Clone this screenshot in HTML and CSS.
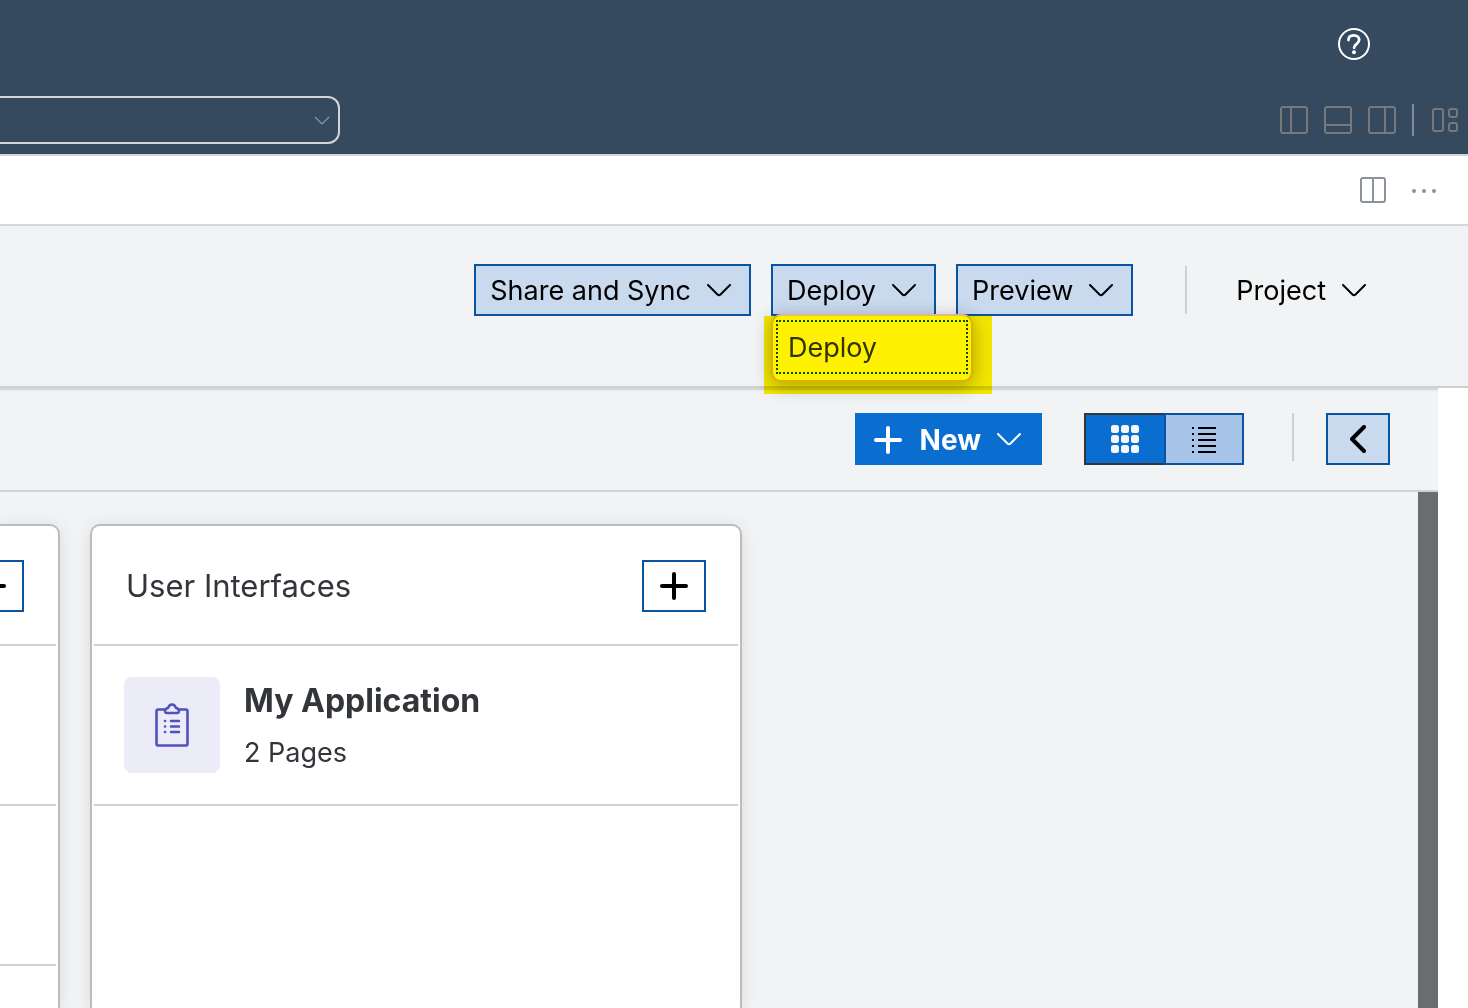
FILE: index.html
```html
<!DOCTYPE html>
<html lang="en">
<head>
<meta charset="utf-8">
<title>Project overview</title>
<link rel="stylesheet" href="styles.css">
</head>
<body>
<header class="shell">
  <div class="shell-top">
    <button class="icon-btn" aria-label="Help">
      <svg width="32" height="32" viewBox="0 0 32 32" fill="none" stroke="#fff" stroke-width="2"><circle cx="16" cy="16" r="15"/><path d="M10.500 12c0-3 2-4.700 5.200-4.700s5.500 1.700 5.500 4.500c0 4-5.100 4-5.100 8" stroke-width="2.800" stroke-linecap="round"/><circle cx="16" cy="24.200" r="2" fill="#fff" stroke="none"/></svg>
    </button>
  </div>
  <div class="shell-bottom">
    <button class="command" aria-label="Command center">
      <svg width="16" height="10" viewBox="0 0 16 10" fill="none" stroke="#8d9aa6" stroke-width="1.200"><path d="M1 2l7 7 7-7"/></svg>
    </button>
    <div class="layout-tools">
      <button class="icon-btn" aria-label="Toggle side bar"><svg width="28" height="28" viewBox="0 0 28 28" fill="none" stroke="#777879" stroke-width="2"><rect x="1" y="1" width="26" height="26" rx="2"/><path d="M11 1v26"/></svg></button>
      <button class="icon-btn" aria-label="Toggle panel"><svg width="28" height="28" viewBox="0 0 28 28" fill="none" stroke="#777879" stroke-width="2"><rect x="1" y="1" width="26" height="26" rx="2"/><path d="M1 19h26"/></svg></button>
      <button class="icon-btn" aria-label="Toggle secondary side bar"><svg width="28" height="28" viewBox="0 0 28 28" fill="none" stroke="#777879" stroke-width="2"><rect x="1" y="1" width="26" height="26" rx="2"/><path d="M17 1v26"/></svg></button>
      <span class="shell-line"></span>
      <button class="icon-btn" aria-label="Customize layout"><svg width="28" height="28" viewBox="0 0 28 28" fill="none" stroke="#777879" stroke-width="2"><rect x="1" y="3" width="10" height="22" rx="2"/><rect x="17" y="3" width="8" height="8" rx="2"/><rect x="17" y="17" width="8" height="8" rx="2"/></svg></button>
    </div>
  </div>
</header>

<div class="tabs">
  <button class="icon-btn" aria-label="Split editor"><svg width="26" height="26" viewBox="0 0 26 26" fill="none" stroke="#8b929c" stroke-width="2"><rect x="1" y="1" width="24" height="24" rx="2"/><path d="M13 1v24"/></svg></button>
  <button class="icon-btn" aria-label="More actions"><svg width="26" height="26" viewBox="0 0 26 26" fill="#8b929c"><circle cx="3" cy="14" r="2"/><circle cx="13" cy="14" r="2"/><circle cx="23" cy="14" r="2"/></svg></button>
</div>

<nav class="toolbar">
  <button class="btn">Share and Sync <svg class="chevron" viewBox="0 0 24 14"><path d="M1 1l9.500 9.500q1.500 1.500 3 0L23 1"/></svg></button>
  <div class="dropdown">
    <button class="btn" aria-expanded="true">Deploy <svg class="chevron" viewBox="0 0 24 14"><path d="M1 1l9.500 9.500q1.500 1.500 3 0L23 1"/></svg></button>
    <div class="menu"><button class="menu-item">Deploy</button></div>
    <div class="marker"></div>
  </div>
  <button class="btn">Preview <svg class="chevron" viewBox="0 0 24 14"><path d="M1 1l9.500 9.500q1.500 1.500 3 0L23 1"/></svg></button>
  <span class="line"></span>
  <button class="btn btn-plain">Project <svg class="chevron" viewBox="0 0 24 14"><path d="M1 1l9.500 9.500q1.500 1.500 3 0L23 1"/></svg></button>
</nav>

<main class="workspace">
  <div class="actions">
    <button class="btn btn-new"><svg class="plus" viewBox="0 0 28 28"><path d="M2 14h24M14 2v24"/></svg><span class="new-label">New</span><svg class="chevron" viewBox="0 0 24 14"><path d="M1 1l9.500 9.500q1.500 1.500 3 0L23 1"/></svg></button>
    <div class="views">
      <button class="view view-on" aria-label="Tiles" aria-pressed="true"><svg width="28" height="28" viewBox="0 0 28 28" fill="#f5f6f7"><rect width="8" height="8" rx="2.500"/><rect x="10" width="8" height="8" rx="2.500"/><rect x="20" width="8" height="8" rx="2.500"/><rect y="10" width="8" height="8" rx="2.500"/><rect x="10" y="10" width="8" height="8" rx="2.500"/><rect x="20" y="10" width="8" height="8" rx="2.500"/><rect y="20" width="8" height="8" rx="2.500"/><rect x="10" y="20" width="8" height="8" rx="2.500"/><rect x="20" y="20" width="8" height="8" rx="2.500"/></svg></button>
      <button class="view" aria-label="List" aria-pressed="false"><svg width="24" height="28" viewBox="0 -2 24 28" stroke="#000" stroke-width="2"><path d="M0 1h2M6 1h18M0 7h2M6 7h18M0 13h2M6 13h18M0 19h2M6 19h18M0 25h2M6 25h18"/></svg></button>
    </div>
    <span class="line"></span>
    <button class="square square-tint" aria-label="Collapse"><svg width="16" height="28" viewBox="0 0 16 28" fill="none" stroke="#000" stroke-width="4" stroke-linecap="round" stroke-linejoin="round"><path d="M14 2L2 14l12 12"/></svg></button>
  </div>

  <div class="canvas">
    <section class="card card-cut">
      <header class="card-head"><button class="square" aria-label="Add"><svg class="plus" viewBox="0 0 28 28"><path d="M2 14h24M14 2v24"/></svg></button></header>
      <div class="row"></div>
      <div class="row"></div>
    </section>
    <section class="card">
      <header class="card-head">
        <h2 class="card-title">User Interfaces</h2>
        <button class="square" aria-label="Add user interface"><svg class="plus" viewBox="0 0 28 28"><path d="M2 14h24M14 2v24"/></svg></button>
      </header>
      <div class="row">
        <span class="tile"><svg width="34" height="44" viewBox="0 0 34 44" fill="none" stroke="#4f52be" stroke-width="2.600" stroke-linecap="round" stroke-linejoin="round"><path d="M10 6.500H3.300Q1.500 6.500 1.500 8.300v32.400q0 1.800 1.800 1.800h27.400q1.800 0 1.800-1.800V8.300q0-1.800-1.800-1.800H24"/><path d="M12 10q-2 0-2-1.800Q10 5.500 13 5q1.200-3.500 4-3.500T21 5q3 .5 3 3.200 0 1.800-2 1.800z" stroke-width="2.400"/><path d="M10 18h.1M16 18h8M10 23.500h.1M16 23.500h8M10 29h.1M16 29h8"/></svg></span>
        <div class="text">
          <h3 class="name">My Application</h3>
          <p class="meta">2 Pages</p>
        </div>
      </div>
    </section>
    <div class="scrollbar"></div>
  </div>
</main>
</body>
</html>
```
FILE: styles.css
```css
* { box-sizing: border-box; }

body {
  margin: 0;
  min-height: 100vh;
  display: flex;
  flex-direction: column;
  background: #fff;
  color: #32363a;
  font-family: Inter, "Liberation Sans", sans-serif;
  font-size: 27px;
  line-height: 36px;
}

button {
  font: inherit;
  color: #000;
  margin: 0;
  padding: 0;
  border: 0;
  background: none;
}

svg { display: block; flex: none; }

h2, h3, p { margin: 0; }

.icon-btn { display: flex; }

/* Shell */
.shell {
  background: #354a5f;
  border-bottom: 2px solid #d4d5d6;
  padding-bottom: 10px;
}

.shell-top {
  display: flex;
  justify-content: flex-end;
  align-items: center;
  height: 88px;
  padding: 0 98px;
}

.shell-bottom {
  display: flex;
  justify-content: space-between;
  align-items: center;
  padding: 8px 8px 0 0;
}

.command {
  display: flex;
  justify-content: flex-end;
  align-items: center;
  width: 340px;
  height: 48px;
  padding-right: 8px;
  border: 2px solid #d4d5d6;
  border-left: 0;
  border-radius: 0 12px 12px 0;
}

.layout-tools { display: flex; align-items: center; gap: 16px; }

.shell-line { width: 2px; height: 32px; background: #828c98; margin-right: 2px; }

.tabs {
  display: flex;
  justify-content: flex-end;
  align-items: center;
  gap: 25px;
  height: 70px;
  padding-right: 31px;
  border-bottom: 2px solid #d5d6d8;
}

/* Toolbar */
.toolbar {
  display: flex;
  justify-content: flex-end;
  gap: 20px;
  padding: 38px 82px 70px;
  background: #f2f3f5;
  border-bottom: 2px solid #cfd0d2;
}

.btn {
  display: flex;
  align-items: center;
  gap: 16px;
  height: 52px;
  padding: 2px 18px 0 14px;
  border: 2px solid #0854a0;
  background: #c9d9ee;
  white-space: nowrap;
}

.btn-plain { border-color: transparent; background: none; }

.chevron {
  width: 24px;
  height: 14px;
  fill: none;
  stroke: currentColor;
  stroke-width: 2;
  stroke-linecap: round;
}

.plus {
  width: 28px;
  height: 28px;
  fill: none;
  stroke: currentColor;
  stroke-width: 4;
  stroke-linecap: round;
}

.line { width: 2px; height: 48px; background: #cfd0d2; }

.toolbar .line { margin: 2px 13px 0 32px; }

.dropdown { position: relative; }

.menu {
  position: absolute;
  z-index: 1;
  top: 50px;
  left: 0;
  width: 202px;
  padding: 4px 3px 6px;
  border: 2px solid #dfbb82;
  border-radius: 10px;
  background: #fff;
  box-shadow: 0 4px 18px rgba(0, 0, 0, .3);
}

.menu-item {
  display: block;
  width: 100%;
  height: 54px;
  padding: 2px 0 0 10px;
  border: 2px dotted #0854a0;
  color: #32363a;
  text-align: left;
}

/* Highlighter stroke over the open menu */
.marker {
  position: absolute;
  z-index: 2;
  top: 52px;
  left: -7px;
  width: 228px;
  height: 78px;
  background: #fff200;
  mix-blend-mode: multiply;
  pointer-events: none;
}

/* Workspace */
.workspace {
  flex: 1;
  display: flex;
  flex-direction: column;
  margin-right: 30px;
  background: #f2f3f5;
}

.actions {
  display: flex;
  justify-content: flex-end;
  padding: 25px 48px;
  border-bottom: 2px solid #d0d1d3;
  box-shadow: inset 0 4px 2px -2px #d0d1d3;
}

.btn-new {
  padding: 2px 19px 0 17px;
  border-color: #0a6ed1;
  background: #0a6ed1;
  color: #fff;
  font-size: 28px;
  font-weight: 700;
}

.new-label { margin-left: 2px; }

.views { display: flex; margin-left: 42px; }

.view {
  display: flex;
  justify-content: center;
  align-items: center;
  width: 80px;
  height: 52px;
  border: 2px solid #0854a0;
  background: #a7c4e9;
}

.view-on {
  border-color: #32363a;
  border-right: 0;
  background: #0a6ed1;
}

.actions .line { margin: 0 32px 0 48px; }

.square {
  flex: none;
  display: flex;
  justify-content: center;
  align-items: center;
  width: 64px;
  height: 52px;
  border: 2px solid #0854a0;
  background: #fff;
}

.square-tint { background: #c9d9ee; }

.canvas {
  flex: 1;
  display: flex;
  gap: 30px;
  overflow: hidden;
}

.card {
  width: 652px;
  margin-top: 32px;
  border: 2px solid #bbbcbd;
  border-bottom: 0;
  border-radius: 10px 10px 0 0;
  background: #fff;
  box-shadow: 0 2px 16px rgba(0, 0, 0, .1);
}

.card-cut { width: 60px; border-left: 0; border-top-left-radius: 0; }

.card-head {
  display: flex;
  justify-content: space-between;
  align-items: center;
  height: 120px;
  margin: 0 2px;
  padding: 2px 32px 0;
  border-bottom: 2px solid #d0d1d3;
}

.card-title { font-size: 31px; line-height: 40px; font-weight: 400; }

.row {
  display: flex;
  align-items: center;
  gap: 24px;
  height: 160px;
  margin: 0 2px;
  padding: 0 30px;
  border-bottom: 2px solid #d0d1d3;
}

.card-cut .card-head,
.card-cut .row {
  justify-content: flex-end;
  margin-left: 0;
  padding-left: 0;
}

.tile {
  display: flex;
  justify-content: center;
  align-items: center;
  width: 96px;
  height: 96px;
  border-radius: 8px;
  background: #ecebf8;
}

.name { font-size: 32px; line-height: 44px; font-weight: 700; }

.meta { margin-top: 12px; }

.scrollbar { width: 20px; margin-left: auto; background: #6b6c6f; }
```
